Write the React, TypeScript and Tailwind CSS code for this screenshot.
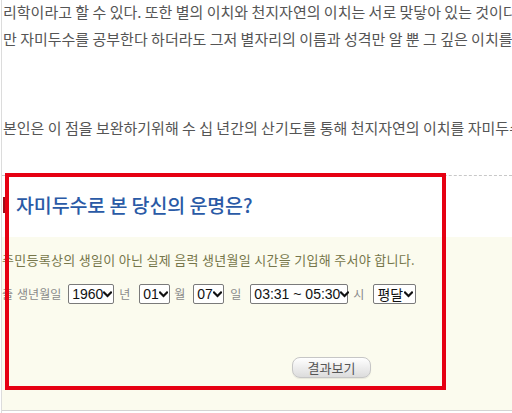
import React from 'react';

const kr = "font-['Noto_Sans_CJK_KR','Noto_Sans',sans-serif]";

const Chevron: React.FC = () => (
  <svg width="9" height="7" viewBox="0 0 9 7" className="shrink-0">
    <path d="M1 1.5 L4.5 5 L8 1.5" fill="none" stroke="#111" strokeWidth="2.2" strokeLinecap="square" />
  </svg>
);

const FakeSelect: React.FC<{ value: string; width: string; korean?: boolean }> = ({ value, width, korean }) => (
  <div
    className={`${width} h-[20px] flex items-center justify-between border border-[#7a7a7a] rounded-[2px] bg-white pl-[3px] pr-[2px] text-[14px] text-[#111] leading-none ${
      korean ? kr : "font-['Liberation_Sans',sans-serif]"
    }`}
  >
    <span className="whitespace-nowrap">{value}</span>
    <Chevron />
  </div>
);

export default function App() {
  return (
    <div className={`relative w-[512px] h-[413px] overflow-hidden bg-white ${kr}`}>
      <div className="h-full ml-[1px] border-l border-[#dcdcdc] flex flex-col">
        {/* article text */}
        <div className="text-[15px] text-[#555] whitespace-nowrap overflow-hidden -mt-[2px]">
          <p className="h-[27px] leading-[27px] pl-[1px]">
            리학이라고 할 수 있다. 또한 별의 이치와 천지자연의 이치는 서로 맞닿아 있는 것이다
          </p>
          <p className="h-[27px] leading-[27px] pl-[1px]">
            만 자미두수를 공부한다 하더라도 그저 별자리의 이름과 성격만 알 뿐 그 깊은 이치를
          </p>
          <p className="h-[27px] leading-[27px] pl-[1px] mt-[62px]">
            본인은 이 점을 보완하기위해 수 십 년간의 산기도를 통해 천지자연의 이치를 자미두수
          </p>
        </div>

        <div className="mt-[34px] border-t border-dashed border-[#c8c8c8]" />

        {/* title */}
        <div className="h-[61px] pb-[4px] flex items-center">
          <div className="w-[6px] h-[16px] bg-[#9e0f1c] ml-[1px]" />
          <h2 className="ml-[7px] text-[19.5px] text-[#2a5aa6] font-medium tracking-[-0.1px]">
            자미두수로 본 당신의 운명은?
          </h2>
        </div>

        {/* form panel */}
        <div className="flex-1 bg-[#fbfbee] border-b border-[#d4d4d4] mb-[2px] pt-[13px]">
          <p className="h-[20px] leading-[20px] text-[13px] tracking-[0.3px] text-[#76764a] whitespace-nowrap">
            주민등록상의 생일이 아닌 실제 음력 생년월일 시간을 기입해 주서야 합니다.
          </p>

          <div className="mt-[14px] h-[20px] flex items-center text-[12px] text-[#8a8a8a] whitespace-nowrap">
            <span>출</span>
            <span className="ml-[4px]">생년월일</span>
            <div className="ml-[7px]">
              <FakeSelect value="1960" width="w-[46px]" />
            </div>
            <span className="ml-[5px]">년</span>
            <div className="ml-[9px]">
              <FakeSelect value="01" width="w-[31px]" />
            </div>
            <span className="ml-[4px]">월</span>
            <div className="ml-[8px]">
              <FakeSelect value="07" width="w-[31px]" />
            </div>
            <span className="ml-[6px]">일</span>
            <div className="ml-[9px]">
              <FakeSelect value="03:31 ~ 05:30" width="w-[98px]" />
            </div>
            <span className="ml-[5px]">시</span>
            <div className="ml-[9px]">
              <FakeSelect value="평달" width="w-[43px]" korean />
            </div>
          </div>

          <div className="mt-[50px] pl-[290px]">
            <button className="w-[79px] h-[21px] rounded-[8px] border border-[#c6c6c6] bg-gradient-to-b from-white to-[#dcdcdc] text-[13px] text-[#555] leading-none shadow-[0_1px_1px_rgba(0,0,0,0.08)]">
              결과보기
            </button>
          </div>
        </div>
      </div>

      {/* highlight annotation over the widget */}
      <div className="absolute left-[5px] top-[173px] w-[441px] h-[217px] border-[4px] border-[#e60012]" />
    </div>
  );
}
